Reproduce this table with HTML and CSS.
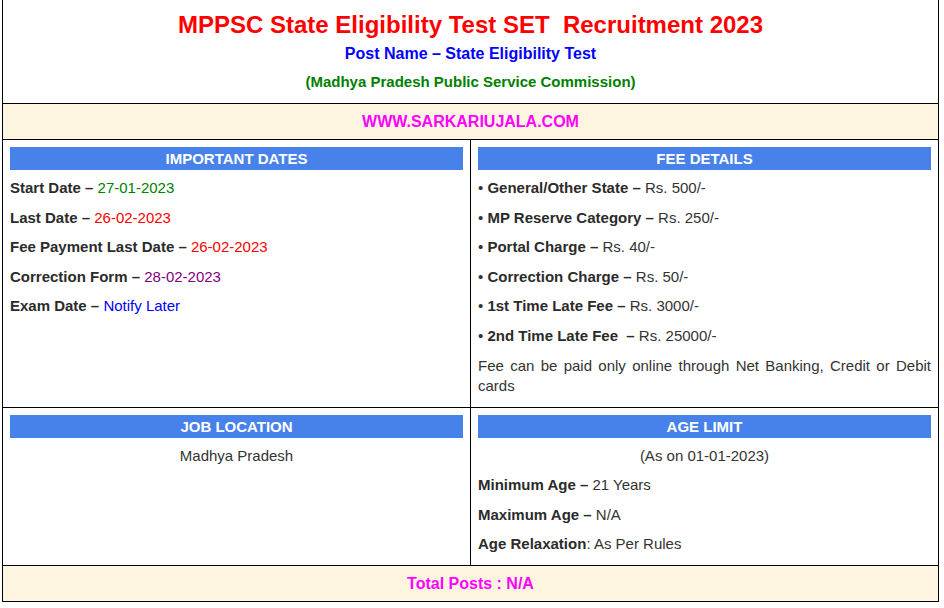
FILE: index.html
```html
<!DOCTYPE html>
<html lang="en">
<head>
<meta charset="utf-8">
<title>MPPSC SET Recruitment 2023</title>
<link rel="stylesheet" href="styles.css">
</head>
<body>
<table class="job">
  <tr>
    <td colspan="2" class="head-cell">
      <div class="title">MPPSC State Eligibility Test SET&nbsp; Recruitment 2023</div>
      <div class="post">Post Name – State Eligibility Test</div>
      <div class="org">(Madhya Pradesh Public Service Commission)</div>
    </td>
  </tr>
  <tr>
    <td colspan="2" class="band">WWW.SARKARIUJALA.COM</td>
  </tr>
  <tr>
    <td class="box">
      <div class="bar">IMPORTANT DATES</div>
      <p><b>Start Date –</b> <span class="c-green">27-01-2023</span></p>
      <p><b>Last Date –</b> <span class="c-red">26-02-2023</span></p>
      <p><b>Fee Payment Last Date –</b> <span class="c-red">26-02-2023</span></p>
      <p><b>Correction Form –</b> <span class="c-purple">28-02-2023</span></p>
      <p><b>Exam Date –</b> <span class="c-blue">Notify Later</span></p>
    </td>
    <td class="box">
      <div class="bar">FEE DETAILS</div>
      <p>• <b>General/Other State –</b> Rs. 500/-</p>
      <p>• <b>MP Reserve Category –</b> Rs. 250/-</p>
      <p>• <b>Portal Charge –</b> Rs. 40/-</p>
      <p>• <b>Correction Charge –</b> Rs. 50/-</p>
      <p>• <b>1st Time Late Fee –</b> Rs. 3000/-</p>
      <p>• <b>2nd Time Late Fee &nbsp;–</b> Rs. 25000/-</p>
      <p class="just">Fee can be paid only online through Net Banking, Credit or Debit cards</p>
    </td>
  </tr>
  <tr>
    <td class="box">
      <div class="bar">JOB LOCATION</div>
      <p class="center">Madhya Pradesh</p>
    </td>
    <td class="box">
      <div class="bar">AGE LIMIT</div>
      <p class="center">(As on 01-01-2023)</p>
      <p><b>Minimum Age –</b> 21 Years</p>
      <p><b>Maximum Age –</b> N/A</p>
      <p><b>Age Relaxation</b>: As Per Rules</p>
    </td>
  </tr>
  <tr>
    <td colspan="2" class="band">Total Posts : N/A</td>
  </tr>
</table>
</body>
</html>
```

FILE: styles.css
```css
html, body {
  margin: 0;
  padding: 0;
  background: #ffffff;
}

body {
  font-family: "Liberation Sans", Arial, sans-serif;
  font-size: 15px;
  color: #333333;
}

.job {
  border-collapse: collapse;
  margin: -1px 0 0 2px;
  width: 937px;
  table-layout: fixed;
}

.job td {
  border: 1px solid #000000;
  vertical-align: top;
  padding: 7px;
}

.job td.head-cell {
  text-align: center;
  padding: 9px 7px 11px;
}

.title {
  color: #ff0000;
  font-weight: bold;
  font-size: 24px;
  line-height: 32px;
}

.post {
  color: #0000ff;
  font-weight: bold;
  font-size: 16px;
  line-height: 20px;
  margin-top: 3px;
}

.org {
  color: #008000;
  font-weight: bold;
  font-size: 15px;
  line-height: 20px;
  margin-top: 8px;
}

.job td.band {
  background: #fdf5df;
  color: #ff00ff;
  font-weight: bold;
  font-size: 16px;
  line-height: 21px;
  text-align: center;
}

.bar {
  background: #4782eb;
  color: #ffffff;
  font-weight: bold;
  font-size: 15px;
  line-height: 23px;
  text-align: center;
  margin-bottom: 8px;
}

.box p {
  margin: 0 0 9.6px;
  line-height: 20px;
}

.box p:last-child {
  margin-bottom: 4px;
}

.box b {
  color: #2b2b2b;
}

.center {
  text-align: center;
}

.just {
  text-align: justify;
}

.c-green { color: #008000; }
.c-red { color: #ff0000; }
.c-purple { color: #800080; }
.c-blue { color: #0000ff; }
```
